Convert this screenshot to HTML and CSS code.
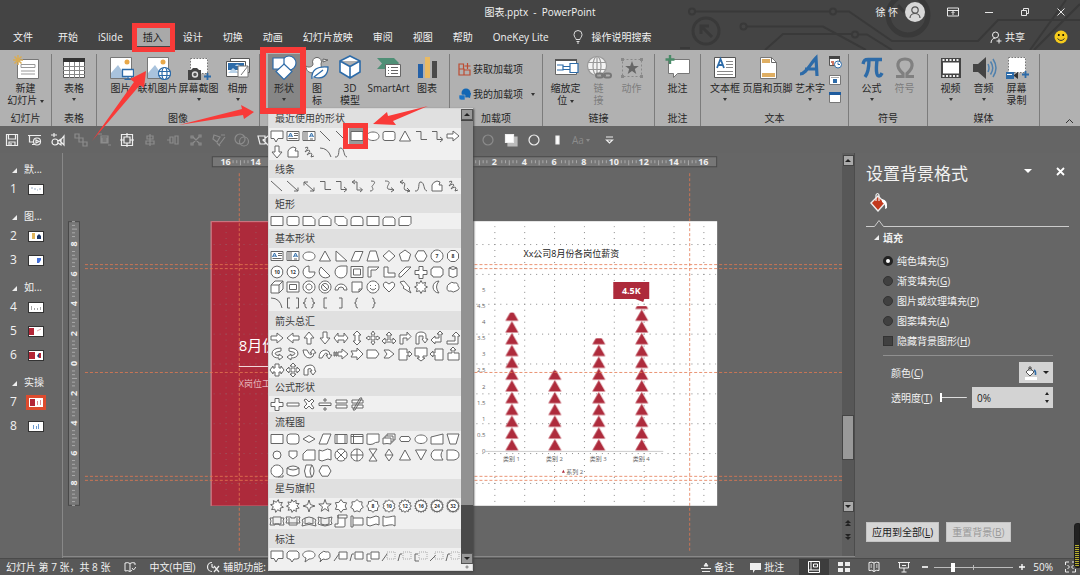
FILE: index.html
```html
<!DOCTYPE html>
<html lang="zh-CN">
<head>
<meta charset="utf-8">
<title>图表.pptx - PowerPoint</title>
<link rel="stylesheet" href="styles.css">
</head>
<body>
<div class="app">
  <header class="top">
    <svg class="circuit" width="400" height="50" viewBox="680 0 400 50">
      <path d="M695 11.500H829M837 11.500h12L892 41h86l20-21h82M747 26.500h76L866 50M765 50l18-16h68M859 34.500h8L892 50M1066 0l-36 50M1080 4l-46 46M680 48h10"/>
      <circle cx="692" cy="11.500" r="3"/><circle cx="833" cy="11.500" r="3"/><circle cx="743.500" cy="26.500" r="3"/><circle cx="855" cy="34.500" r="3"/>
      <circle class="ring" cx="706" cy="31" r="13"/><path class="ring" d="M712 37l-10-10M701 34v-8h8"/>
      <circle class="ring wide" cx="908" cy="15" r="20"/><path class="ring" d="M898 5l6 7"/>
    </svg>
    <div class="titlebar">
      <h1 class="title">图表.pptx&nbsp; -&nbsp; PowerPoint</h1>
      <div class="account">
        <span>徐 怀</span>
        <svg class="avatar" width="20" height="20" viewBox="0 0 20 20"><circle cx="10" cy="10" r="10" fill="#d8d8d8"/><g fill="none" stroke="#555" stroke-width="1.200"><circle cx="10" cy="8" r="3.200"/><path d="M5 16c0-6 10-6 10 0"/></g></svg>
        <button class="win" aria-label="功能区显示选项"><svg width="12" height="12" viewBox="0 0 12 12"><path d="M.5 2h11v8H.5zM.5 4.500h11M6 9V5.500M4.500 7L6 5.500 7.500 7"/></svg></button>
        <button class="win" aria-label="最小化"><svg width="12" height="12" viewBox="0 0 12 12"><path d="M2 6.500h8"/></svg></button>
        <button class="win" aria-label="还原"><svg width="12" height="12" viewBox="0 0 12 12"><path d="M2.500 4.500h5v5h-5zM4.500 4V2.500h5v5H8"/></svg></button>
        <button class="win" aria-label="关闭"><svg width="12" height="12" viewBox="0 0 12 12"><path d="M2.500 2.500l7 7M9.500 2.500l-7 7"/></svg></button>
      </div>
    </div>
    <nav class="tabs">
      <button class="tab file">文件</button><button class="tab">开始</button><button class="tab">iSlide</button><button class="tab active">插入</button><button class="tab">设计</button><button class="tab">切换</button><button class="tab">动画</button><button class="tab">幻灯片放映</button><button class="tab">审阅</button><button class="tab">视图</button><button class="tab">帮助</button><button class="tab">OneKey Lite</button>
      <button class="tab tell"><svg width="10" height="14" viewBox="0 0 10 14" fill="none" stroke="#ddd"><path d="M3 9.500C3 8 1 7 1 4.500a4 4 0 018 0C9 7 7 8 7 9.500zM3.500 11.500h3M4 13h2"/></svg>操作说明搜索</button>
      <button class="tab share"><svg width="12" height="13" viewBox="0 0 12 13" fill="none" stroke="#eee"><circle cx="5.500" cy="4" r="3"/><path d="M1 12c0-3 2-5 4.500-5M9 7.500v5M6.500 10h5"/></svg>共享</button>
      <svg class="smile" width="14" height="14" viewBox="0 0 14 14"><circle cx="7" cy="7" r="6.500" fill="#f5cb1c"/><circle cx="4.800" cy="5" r="1"/><circle cx="9.200" cy="5" r="1"/><path d="M3.500 8.500q3.500 4 7 0" fill="none" stroke="#333"/></svg>
    </nav>
  </header>

  <section class="ribbon">
    <div class="group g-slide">
      <div class="tools">
        <button class="tool"><svg viewBox="0 0 26 26"><path d="M4.500 5.500h21v19h-21z" fill="#fff" stroke="#777"/><path d="M8 10.500h14v3H8zM8 17h14M8 20h14" stroke="#999" fill="none"/><path d="M5 1v10M0 6h10M1.500 2.500l7 7M8.500 2.500l-7 7" stroke="#d9ac55" stroke-width="1.500"/></svg><span>新建</span><span>幻灯片 <i class="dd"></i></span></button>
      </div><div class="caption">幻灯片</div>
    </div>
    <div class="group g-table">
      <div class="tools">
        <button class="tool"><svg viewBox="0 0 26 26"><path d="M2.500 4.500h21v19h-21z" fill="#fff" stroke="#555"/><path d="M2 4h22v4H2z" fill="#333"/><path d="M2 12.500h22M2 16.500h22M2 20.500h22M8.500 8v16M13.500 8v16M18.500 8v16" stroke="#888"/></svg><span>表格</span><i class="dd"></i></button>
      </div><div class="caption">表格</div>
    </div>
    <div class="group g-image">
      <div class="tools">
        <button class="tool"><svg viewBox="0 0 26 26"><path d="M2.500 3.500h21v21h-21z" fill="#fff" stroke="#777"/><circle cx="19" cy="8" r="2.500" fill="#e8a849"/><path d="M3 24V19l7-8 9 13z" fill="#a9c3dd"/><path d="M14.500 15.500h11v7h-11zM20 23v2.500M16.500 25.500h7" fill="#fff" stroke="#2d6ba8" stroke-width="1.300"/></svg><span>图片</span></button>
        <button class="tool"><svg viewBox="0 0 26 26"><path d="M2.500 3.500h21v21h-21z" fill="#fff" stroke="#777"/><circle cx="18" cy="8" r="2.500" fill="#e8a849"/><path d="M3 24V19l7-8 9 13z" fill="#a9c3dd"/><g fill="#fff" stroke="#2d6ba8" stroke-width="1.200"><circle cx="19.500" cy="19.500" r="6"/><ellipse cx="19.500" cy="19.500" rx="2.500" ry="6"/><path d="M13.500 17.500h12M13.500 21.500h12" fill="none"/></g></svg><span>联机图片</span></button>
        <button class="tool"><svg viewBox="0 0 26 26"><path d="M4.500 4.500h17v15h-17z" fill="#fff" stroke="#777" stroke-dasharray="1.500 1.500"/><path d="M2 16h3l2-2h4l2 2h2v10H2z" fill="#444"/><circle cx="9" cy="20.500" r="2.500" fill="#555" stroke="#ddd" stroke-width="1.400"/><path d="M21.500 19v7M18 22.500h7" stroke="#2d6ba8" stroke-width="1.800"/></svg><span>屏幕截图</span><i class="dd"></i></button>
        <button class="tool"><svg viewBox="0 0 26 26"><path d="M5.500 4.500h19v14h-19z" fill="#fff" stroke="#555"/><path d="M1.500 7.500h19v15h-19z" fill="#fff" stroke="#555"/><path d="M3 9h16v7H3z" fill="#2d6ba8"/><path d="M3 19l5-5 6 5zM10 12c2-3 5-1 5 0z" fill="#b9d2e8"/><path d="M13 12h10v11H13zM16 21l7-9" fill="#fff" stroke="#777"/></svg><span>相册</span><i class="dd"></i></button>
      </div><div class="caption">图像</div>
    </div>
    <div class="group g-illus">
      <div class="tools">
        <button class="tool pressed" aria-expanded="true"><svg viewBox="0 0 26 26" fill="#fff" stroke="#2d6ba8" stroke-width="1.200"><circle cx="18" cy="9" r="7"/><path d="M2 4h11v11H2z"/><path d="M13 10l8 7.500-8 8-8-8z"/></svg><span>形状</span><i class="dd"></i></button>
        <button class="tool"><svg viewBox="0 0 26 26" fill="#fff" stroke="#666"><path d="M2 12c0 5 3 7 8 7 6 0 8-4 7-9a4.500 4.500 0 10-8 0c0 3-5 4-7 2z"/><path d="M19 5l5 1-5 2z"/><path d="M8 25c-1-9 5-13 16-12 0 8-5 13-14 10l9-7" stroke="#2d6ba8" stroke-width="1.300"/></svg><span>图</span><span>标</span></button>
        <button class="tool"><svg viewBox="0 0 26 26" fill="#fff" stroke="#2d6ba8" stroke-width="1.600"><path d="M13 2l10 5v11l-10 6-10-6V7zM3 7l10 5.500L23 7M13 12.500V24"/></svg><span>3D</span><span>模型</span></button>
        <button class="tool"><svg viewBox="0 0 26 26"><path d="M1 4h17l5 5-5 6H1l5-5.500z" fill="#4f8f76"/><path d="M9.500 10.500h15v12h-15z" fill="#fff" stroke="#666"/><path d="M12 13.500h1M12 16.500h1M12 19.500h1M15 13.500h7M15 16.500h7M15 19.500h7" stroke="#666"/></svg><span>SmartArt</span></button>
        <button class="tool"><svg viewBox="0 0 26 26"><path d="M4 10h5v14H4z" fill="#2460a7"/><path d="M11 3h5v21h-5z" fill="#e9ba62"/><path d="M18 7h5v17h-5z" fill="#4a4a4a"/></svg><span>图表</span></button>
      </div>
    </div>
    <div class="group g-addin">
      <div class="links">
        <button class="line"><svg width="13" height="13" viewBox="0 0 13 13" fill="none" stroke="#bd4b31" stroke-width="1.200"><path d="M1 1h4.500v5H1zM1 6h5v6H1zM6 7h6v5H6zM9.500 0v6M6.500 3h6"/></svg>获取加载项</button>
        <button class="line"><svg width="13" height="13" viewBox="0 0 13 13"><circle cx="8" cy="5" r="4.500" fill="#1267b4"/><path d="M8 5h5l-1 5-3-1z" fill="#1267b4"/><path d="M1 7h6v5H3q-2 0-2-2z" fill="#1b74c5" stroke="#b1b1b1" stroke-width=".6"/></svg>我的加载项 <i class="dd"></i></button>
      </div><div class="caption">加载项</div>
    </div>
    <div class="group g-link">
      <div class="tools">
        <button class="tool"><svg viewBox="0 0 26 26"><path d="M2.500 5.500h21v15h-21z" fill="#fff" stroke="#666"/><path d="M2 6h22" stroke="#555" stroke-width="2"/><path d="M4 11h6v5H4M17 9.500h8v9h-8zM10 12.500h7v3h-7z" fill="#fff" stroke="#2d6ba8" stroke-width="1.200"/></svg><span>缩放定</span><span>位 <i class="dd"></i></span></button>
        <button class="tool off"><svg viewBox="0 0 26 26" fill="#f3f3f3" stroke="#999" stroke-width="1.200"><circle cx="11" cy="12" r="9.500"/><ellipse cx="11" cy="12" rx="4" ry="9.500"/><path d="M2 8.500h18M2 15.500h18M11 2.500v19" fill="none"/><g fill="none" stroke="#777" stroke-width="2"><rect x="10" y="19.500" width="7" height="4" rx="2"/><rect x="18" y="19.500" width="7" height="4" rx="2"/><path d="M15 21.500h5"/></g></svg><span>链</span><span>接</span></button>
        <button class="tool off"><svg viewBox="0 0 26 26"><path d="M3.500 5.500h19v17h-19z" fill="none" stroke="#888" stroke-dasharray="2 2"/><path d="M13 7l1.800 5h5l-4 3 1.500 5-4.300-3-4.300 3 1.500-5-4-3h5z" fill="#666"/><path d="M2 4h3v3H2zM21 4h3v3h-3zM2 21h3v3H2zM21 21h3v3h-3z" fill="#888"/></svg><span>动作</span></button>
      </div><div class="caption">链接</div>
    </div>
    <div class="group g-comment">
      <div class="tools">
        <button class="tool"><svg viewBox="0 0 26 26"><path d="M3.500 5.500h21v14h-12l-4 4v-4h-5z" fill="#fff" stroke="#777"/><path d="M5 1v9M.5 5.500h9" stroke="#4a8a68" stroke-width="2.400"/></svg><span>批注</span></button>
      </div><div class="caption">批注</div>
    </div>
    <div class="group g-text">
      <div class="tools">
        <button class="tool"><svg viewBox="0 0 26 26"><path d="M2.500 3.500h21v20h-21z" fill="#fff" stroke="#555"/><path d="M5 14l3.500-9 3.500 9M6 11h5" fill="none" stroke="#2d6ba8" stroke-width="1.800"/><path d="M14 7.500h7M14 10.500h7M14 13.500h7M5 17.500h16M5 20.500h16" stroke="#888"/></svg><span>文本框</span><i class="dd"></i></button>
        <button class="tool"><svg viewBox="0 0 26 26"><path d="M5.500 3.500h11l5 5v16h-16z" fill="#fff" stroke="#777"/><path d="M16.500 3.500v5h5" fill="none" stroke="#666"/><path d="M7 5h8v4H7zM7 19h13v4H7z" fill="#dfae62"/></svg><span>页眉和页脚</span></button>
        <button class="tool"><svg viewBox="0 0 26 26"><path d="M3 20C9 20 13 10 19 4l1 18M8 15h12" fill="none" stroke="#2d6ba8" stroke-width="3.200"/></svg><span>艺术字</span><i class="dd"></i></button>
        <div class="mini">
          <button aria-label="日期和时间"><svg width="14" height="14" viewBox="0 0 14 14"><path d="M1.500 2.500h10v8h-10z" fill="#fff" stroke="#555"/><path d="M1 1h11v3H1z" fill="#444"/><path d="M3 7h3M4 9h2" stroke="#bd4b31" stroke-width="1.500"/><circle cx="10" cy="9.500" r="3.500" fill="#fff" stroke="#2d6ba8"/><path d="M10 7.500v2h2" fill="none" stroke="#2d6ba8"/></svg></button>
          <button aria-label="幻灯片编号"><svg width="14" height="14" viewBox="0 0 14 14"><path d="M1.500 2.500h11v9h-11z" fill="#fff" stroke="#777"/><path d="M3 4.500h8" stroke="#aaa"/><path d="M5 6h4v4H5z" fill="#2d6ba8"/></svg></button>
          <button aria-label="对象"><svg width="14" height="14" viewBox="0 0 14 14"><path d="M1.500 1.500h11v10h-11z" fill="#fff" stroke="#777"/><path d="M1 1h12v3H1z" fill="#1f5c9e"/></svg></button>
        </div>
      </div><div class="caption">文本</div>
    </div>
    <div class="group g-symbol">
      <div class="tools">
        <button class="tool"><svg viewBox="0 0 26 26" fill="none" stroke="#2d6ba8" stroke-width="3.400"><path d="M4 10c1-4 2-4.500 5-4.500h14M10 6c0 8-1 13-4 17M18 6c-1 9-1 16 2 16 2 0 2-1 3-3"/></svg><span>公式</span><i class="dd"></i></button>
        <button class="tool off"><svg viewBox="0 0 26 26" fill="none" stroke="#808080" stroke-width="3.200"><path d="M4 22.500h7v-3C3 13 5 5 13 5s10 8 2 14.500v3h7"/></svg><span>符号</span></button>
      </div><div class="caption">符号</div>
    </div>
    <div class="group g-media">
      <div class="tools">
        <button class="tool"><svg viewBox="0 0 26 26"><path d="M3 4h20v20H3z" fill="#444"/><path d="M5 8.500h16v11H5z" fill="#fff"/><path d="M4.500 6h17M4.500 22h17" stroke="#eee" stroke-width="2" stroke-dasharray="2 1.500"/></svg><span>视频</span><i class="dd"></i></button>
        <button class="tool"><svg viewBox="0 0 26 26"><path d="M2 10h5l8-7v22l-8-7H2z" fill="#444"/><path d="M17 10q2 4 0 8M19.500 7.500q4.500 6.500 0 13M22 5q6 9 0 18" fill="none" stroke="#4f80ad" stroke-width="1.500"/></svg><span>音频</span><i class="dd"></i></button>
        <button class="tool"><svg viewBox="0 0 26 26"><path d="M4.500 3.500h17v15h-17z" fill="#fff" stroke="#777" stroke-dasharray="1.500 1.500"/><path d="M2 18h8v7H2z" fill="#2d6ba8"/><path d="M10 21l4-3v7l-4-3z" fill="#333"/><path d="M3 20.500h5" stroke="#fff"/><path d="M21.500 17v7M18 20.500h7" stroke="#2d6ba8" stroke-width="1.800"/></svg><span>屏幕</span><span>录制</span></button>
      </div><div class="caption">媒体</div>
    </div>
    <button class="collapse" aria-label="折叠功能区"><svg width="9" height="6" viewBox="0 0 9 6" fill="none" stroke="#333"><path d="M1 5l3.500-3.500L8 5"/></svg></button>
  </section>

  <div class="qat">
    <div class="qat-left" id="qatLeft"></div>
    <div class="qat-right" id="qatRight"></div>
  </div>

  <main class="work">
    <aside class="thumbs">
      <h2>默...</h2>
      <button class="thumb"><b>1</b><svg viewBox="0 0 14 9"><path d="M0 0h14v9H0z" fill="#fff"/><path d="M2 3h2M5 4h2M8 5h1M10 4h2" stroke="#9bb0c8"/></svg></button>
      <h2>图...</h2>
      <button class="thumb"><b>2</b><svg viewBox="0 0 14 9"><path d="M0 0h14v9H0z" fill="#fff"/><path d="M3 1h3v6H3z" fill="#dfb55c"/><path d="M8 4l2-2 2 2v3H8z" fill="#1c3667"/></svg></button>
      <button class="thumb"><b>3</b><svg viewBox="0 0 14 9"><path d="M0 0h14v9H0z" fill="#fff"/><path d="M8 2h4v2l-2 3H8z" fill="#4470d8"/></svg></button>
      <h2>如...</h2>
      <button class="thumb"><b>4</b><svg viewBox="0 0 14 9"><path d="M0 0h14v9H0z" fill="#fff"/><path d="M2.500 3v4M5.500 5v2M8.500 5v2M11.500 4v3" stroke="#a5a5a5"/></svg></button>
      <button class="thumb"><b>5</b><svg viewBox="0 0 14 9"><path d="M0 0h14v9H0z" fill="#fff"/><path d="M0 1h5v7H0z" fill="#b32536"/><path d="M8 4l4-2" stroke="#e2a5aa"/></svg></button>
      <button class="thumb"><b>6</b><svg viewBox="0 0 14 9"><path d="M0 0h14v9H0z" fill="#fff"/><path d="M0 1h6v7H0z" fill="#b32536"/><path d="M8 5l2-3v5z" fill="#223a78"/><path d="M10 2h2v5h-2z" fill="#b32536"/></svg></button>
      <h2>实操</h2>
      <button class="thumb current"><b>7</b><svg viewBox="0 0 14 9"><path d="M0 0h14v9H0z" fill="#fff"/><path d="M1 1h5v7H1z" fill="#b32536"/><path d="M8.500 3v4M11.500 2v5" stroke="#e08a90"/></svg></button>
      <button class="thumb"><b>8</b><svg viewBox="0 0 14 9"><path d="M0 0h14v9H0z" fill="#fff"/><path d="M4.500 3v4M7.500 4v3M9.500 2v5" stroke="#6d9bd0"/></svg></button>
    </aside>

    <section class="editor">
      <svg class="canvas" id="canvas" width="780" height="403" viewBox="62 153 780 403">
        <defs>
          <pattern id="dotRow" width="5.980" height="29.900" x="464" y="363.500" patternUnits="userSpaceOnUse"><path d="M0 0h1v1H0z"/></pattern>
          <pattern id="dotCol" width="29.900" height="5.980" x="464" y="363.500" patternUnits="userSpaceOnUse"><path d="M0 0h1v1H0z"/></pattern>
          <pattern id="tri" width="13" height="11.800" x="0" y="451" patternUnits="userSpaceOnUse"><path d="M6.500 0L13 11.200H0z" fill="#ae2b3c"/></pattern>
        </defs>
        <rect x="210" y="221" width="507" height="285" fill="#fff"/>
        <rect x="210" y="221" width="250" height="285" fill="#ad2a3b"/>
        <path d="M210.500 506V221.500H460" fill="none" stroke="#cf7d87"/>
        <g class="dots-light"><rect x="212" y="226" width="248" height="278" fill="url(#dotRow)"/><rect x="212" y="226" width="248" height="278" fill="url(#dotCol)"/></g>
        <g class="dots"><rect x="470" y="226" width="246" height="278" fill="url(#dotRow)"/><rect x="470" y="226" width="246" height="278" fill="url(#dotCol)"/></g>
        <text x="238" y="351" class="s-title">8月份</text>
        <path d="M238 366.500h120" stroke="#f3d9dc"/>
        <text x="238" y="387" class="s-sub">X岗位工</text>
        <text x="571" y="257" class="c-title">Xx公司8月份各岗位薪资</text>
        <path d="M485 451.500h178" stroke="#ccc"/>
        <g id="chart"></g>
        <path d="M613 282h36v17h-5l-1 3-8-3h-22z" fill="#ad2a3b"/>
        <text x="631" y="294" class="c-call">4.5K</text>
        <path d="M563 470l1.500 3h-3z" fill="#ad2a3b"/><text x="566" y="474" class="c-small">系列 2</text>
        <path class="guide" d="M84 264.500h758M84 268.500h758M84 372.500h758M84 476.500h758M84 480.500h758M238.500 173v379M689.500 173v379"/>
        <g id="rulers"></g>
      </svg>
      <div class="vscroll">
        <button aria-label="向上滚动"><i class="up"></i></button>
        <div class="track"><div class="knob"></div></div>
        <button aria-label="向下滚动"><i class="down"></i></button>
        <span class="jump"><i class="up"></i><i class="up"></i></span><span class="jump"><i class="down"></i><i class="down"></i></span>
      </div>
    </section>

    <aside class="format">
      <div class="f-head"><h2>设置背景格式</h2><i class="down light"></i><button aria-label="关闭窗格"><svg width="9" height="9" viewBox="0 0 9 9" stroke="#fff" stroke-width="1.800"><path d="M1 1l7 7M8 1L1 8"/></svg></button></div>
      <svg class="bucket" width="20" height="20" viewBox="0 0 20 20"><path d="M9 4l7 7-7 8-7-8z" fill="#c2391d" stroke="#eee" stroke-width="1.400"/><path d="M7 9V3q1.500-3 3 0v6" fill="none" stroke="#eee" stroke-width="1.200"/><path d="M13 7q6 1 5 9l-2 1q1-5-3-7z" fill="#fff"/></svg>
      <svg class="notch" width="203" height="8" viewBox="0 0 203 8" fill="none" stroke="#ccc"><path d="M0 7.500h8.500L13 1.500l4.500 6H203"/></svg>
      <form class="f-body">
        <h3>填充</h3>
        <label><input type="radio" name="fill" checked><span>纯色填充(<u>S</u>)</span></label>
        <label><input type="radio" name="fill"><span>渐变填充(<u>G</u>)</span></label>
        <label><input type="radio" name="fill"><span>图片或纹理填充(<u>P</u>)</span></label>
        <label><input type="radio" name="fill"><span>图案填充(<u>A</u>)</span></label>
        <label><input type="checkbox"><span>隐藏背景图形(<u>H</u>)</span></label>
        <hr>
        <div class="row"><span>颜色(<u>C</u>)</span><button type="button" class="color" aria-label="颜色"><svg width="14" height="14" viewBox="0 0 14 14"><path d="M6 2l4 4-4 4-4-4z" fill="#fff" stroke="#555"/><path d="M5 5V1h2v4" fill="none" stroke="#555"/><path d="M10 4q2 1 1.500 5" fill="none" stroke="#2d6ba8" stroke-width="1.500"/><path d="M1 11h12v3H1z" fill="#fff"/></svg><i class="down"></i></button></div>
        <div class="row"><label for="alpha">透明度(<u>T</u>)</label><input class="slide" type="range" value="0" aria-label="透明度滑块"><span class="spin"><input id="alpha" type="text" value="0%"><span class="arrows"><i class="up"></i><i class="down"></i></span></span></div>
      </form>
      <div class="f-foot"><button>应用到全部(<u>L</u>)</button><button disabled>重置背景(<u>B</u>)</button></div>
      <div class="meter"></div>
    </aside>
  </main>

  <footer class="status">
    <span>幻灯片 第 7 张，共 8 张</span>
    <svg class="book" width="12" height="12" viewBox="0 0 12 12" fill="none" stroke="#eee"><path d="M6 2.500Q4 1 1 2v8q3-1 5 .5zM6 2.500Q8 1 11 2v2M6 10.500q1-1 2-1M8 7l1.500 2L12 6"/></svg>
    <span class="lang">中文(中国)</span>
    <span class="access"><svg width="13" height="12" viewBox="0 0 13 12" fill="none" stroke="#eee" stroke-width="1.200"><path d="M5 1.500a4.500 4.500 0 000 9M5 3v3l2 1M7 5l5 6M12 5l-5 6"/></svg>辅助功能:</span>
    <span class="right">
      <button class="note"><svg width="10" height="11" viewBox="0 0 10 11" stroke="#eee"><path d="M5 1l2 3H3zM0 6.500h10M1 9.500h8" fill="#eee"/></svg>备注</button>
      <button class="cmt"><svg width="12" height="11" viewBox="0 0 12 11" fill="#eee"><path d="M1 1h11v7H6l-2 3V8H1z"/></svg>批注</button>
      <button class="view on" aria-label="普通视图"><svg width="12" height="12" viewBox="0 0 12 12" fill="none" stroke="#fff"><path d="M.5.500h11v11H.5zM.5 9h11M3 1v8M5.500 3h4v3h-4z"/></svg></button>
      <button class="view" aria-label="幻灯片浏览"><svg width="12" height="12" viewBox="0 0 12 12" fill="#eee"><path d="M0 1h5v4H0zM7 1h5v4H7zM0 7h5v4H0zM7 7h5v4H7z"/></svg></button>
      <button class="view" aria-label="阅读视图"><svg width="12" height="12" viewBox="0 0 12 12" fill="none" stroke="#eee"><path d="M1 1.500q3-1 5 .5 2-1.500 5-.5v8q-3-1-5 1-2-2-5-1zM6 2v9M2.500 4H4M2.500 6H4M8 4h1.500M8 6h1.500"/></svg></button>
      <button class="view" aria-label="幻灯片放映"><svg width="12" height="12" viewBox="0 0 12 12" fill="none" stroke="#eee"><path d="M0 1.500h12M1.500 2v5h9V2M6 7v4M3.500 11h5M4 4.500h4"/></svg></button>
      <span class="zoom">
        <svg width="6" height="8" viewBox="0 0 6 8" stroke="#fff" stroke-width="1.600"><path d="M0 4h6"/></svg>
        <input type="range" value="22" aria-label="缩放">
        <svg width="6" height="8" viewBox="0 0 6 8" stroke="#fff" stroke-width="1.300"><path d="M0 4h6M3 1v6"/></svg>
      </span>
      <span class="pct">50%</span>
      <svg class="fit" width="11" height="12" viewBox="0 0 11 12" fill="none" stroke="#eee"><path d="M.5 4V1H4M7 1h3.500v3M.5 8v3H4M7 11h3.500V8M2.500 4l2 2-2 2M8.500 4l-2 2 2 2"/></svg>
    </span>
  </footer>

  <div class="menu">
    <div class="gallery" id="gallery"></div>
    <div class="m-scroll"><button aria-label="向上"><i class="up"></i></button><div class="m-track"></div><button aria-label="向下"><i class="down"></i></button></div>
    <div class="grip"></div>
  </div>

  <div class="mark mark-tab"></div>
  <div class="mark mark-shape"></div>
  <div class="mark mark-rect"></div>
  <svg class="arrows-over" width="440" height="150" viewBox="0 0 440 150" fill="#f93a38"><path d="M92 141L134 82l-4-3 16-8-2 17-4-3z"/><path d="M179 125L242 109l-1-4 13 7-10 7-1-4z"/><path d="M428 106L388 116l-1-4-14 12 23 1-3-4z"/></svg>
</div>
<script src="app.js"></script>
</body>
</html>
```
FILE: styles.css
```css
* { box-sizing: border-box; }
body { margin: 0; background: #666; font: 10px/12px "Open Sans", "Noto Sans CJK SC", sans-serif; color: #f2f2f2; }
button { font: inherit; color: inherit; background: none; border: 0; padding: 0; margin: 0; }
h1, h2, h3 { margin: 0; font: inherit; }
.app { position: relative; display: flex; flex-direction: column; height: 100vh; min-height: 540px; overflow: hidden; }
i.up, i.down, i.dd { display: inline-block; width: 0; height: 0; border: 3px solid transparent; }
i.up { border-top: 0; border-bottom-color: #222; }
i.down { border-bottom: 0; border-top-color: #222; }
i.dd { border-width: 3px 2px 0; border-top-color: #333; vertical-align: middle; }
i.light { border-top-color: #fff; border-width: 4px 4px 0; }

.top { position: relative; flex: none; background: #444; }
.circuit { position: absolute; right: 0; top: 0; fill: none; stroke: #393939; stroke-width: 2; }
.ring { stroke-width: 3; }
.wide { stroke-width: 5; }
.titlebar { position: relative; display: grid; grid-template-columns: 1fr auto 1fr; height: 24px; align-items: center; }
.title { grid-column: 2; }
.account { display: flex; justify-content: flex-end; align-items: center; padding-right: 1px; }
.avatar { margin: 0 10px 0 7px; }
.win { width: 36px; height: 24px; display: grid; place-items: center; }
.win svg { fill: none; stroke: #e6e6e6; }
.tabs { position: relative; display: flex; height: 26px; align-items: center; padding: 0 12px 0 3px; }
.tab { padding: 3px 10px; white-space: nowrap; }
.tab.file { margin-right: 5px; }
.tab.active { background: #a9a9a9; color: #222; }
.tell { display: flex; align-items: center; gap: 9px; margin-left: 4px; }
.share { display: flex; align-items: center; gap: 3px; margin-left: auto; margin-right: 19px; }

.ribbon { display: grid; flex: none; grid-template-columns: 52fr 45fr 163fr 190fr 93fr 112fr 46fr 148fr 79fr 112fr 40fr; height: 76px; background: #b1b1b1; color: #262626; }
.group { display: flex; flex-direction: column; margin: 4px 0; border-right: 1px solid #7c7c7c; }
.tools { display: flex; flex: 1; justify-content: center; }
.caption { text-align: center; height: 12px; margin-bottom: 2px; }
.tool { display: flex; flex-direction: column; align-items: center; white-space: nowrap; flex: none; width: 33px; height: 58px; }
.tool svg { width: 26px; height: 26px; margin-bottom: 2px; flex: none; }
.tool > i.dd { margin-top: 4px; }
.tool.off { color: #7d7d7d; }
.pressed { background: #868686; }
.g-image .tool { width: 37px; }
.g-image .tool:nth-child(3) { width: 45px; }
.g-image .tool:nth-child(4) { width: 33px; }
.g-illus .tools { padding-left: 2px; }
.g-illus .tool:nth-child(4) { width: 44px; }
.g-text .tool:nth-child(2) { width: 50px; }
.g-text .tool:nth-child(1), .g-text .tool:nth-child(3) { width: 35px; }
.mini { display: flex; flex-direction: column; gap: 4px; padding-top: 1px; }
.mini button { height: 14px; }
.links { flex: 1; display: flex; flex-direction: column; gap: 11px; padding: 8px 0 0 8px; }
.line { display: flex; align-items: center; gap: 2px; height: 14px; white-space: nowrap; }
.line i.dd { margin-left: 6px; }
.collapse { align-self: end; justify-self: center; margin: 0 0 4px 18px; }

.qat { display: flex; flex: none; height: 27px; align-items: center; background: #656565; }
.qat svg { width: 16px; height: 16px; fill: none; stroke: #eee; stroke-width: 1.2; flex: none; }
.qat svg.dim { stroke: #8c8c8c; }
.qat-left { display: flex; gap: 7px; padding-left: 4px; width: 480px; }
.qat-right { display: flex; gap: 7px; }
.aa { color: #8c8c8c; width: 22px; line-height: 16px; white-space: nowrap; }
.aa i.dd { border-top-color: #8c8c8c; }

.work { display: flex; flex: 1; min-height: 0; }
.thumbs { width: 63px; flex: none; border-right: 1px solid #888; padding-top: 1px; }
.thumbs h2 { height: 23px; padding: 9px 0 0 24px; position: relative; white-space: nowrap; }
.thumbs h2::before, .f-body h3::before { content: ""; position: absolute; left: 12px; top: 14px; border-left: 5px solid transparent; border-bottom: 5px solid #eee; }
.thumb { display: flex; align-items: center; height: 24px; width: 100%; padding-left: 10px; }
.thumb b { font-weight: 400; font-size: 12px; width: 18px; text-align: left; }
.thumb svg { width: 16px; height: 11px; border: 1px solid #333; }
.current svg { outline: 2px solid #dd4b2e; border-color: #dd4b2e; }

.editor { flex: 1; min-width: 0; display: flex; border-bottom: 1px solid #888; margin-bottom: 1px; }
.canvas { flex: 1; min-width: 0; display: block; }
#dotRow path, #dotCol path { fill: #888; }
.dots-light { opacity: .45; }
.guide { fill: none; stroke: #e37850; stroke-dasharray: 3 2; stroke-opacity: .8; }
.canvas text { fill: #fff; }
.canvas .s-title { font-size: 15px; }
.canvas .s-sub { fill: #e5b5bb; font-size: 9px; }
.canvas .c-title { fill: #222; text-anchor: middle; font-size: 9px; }
.canvas .c-call { font-size: 9px; font-weight: 700; text-anchor: middle; }
.canvas .c-small { fill: #666; font-size: 6px; }
.canvas .end { text-anchor: end; }
.canvas .mid { text-anchor: middle; }
.canvas .rule { font-size: 9px; font-weight: 700; fill: #eee; text-anchor: middle; }
.vscroll { width: 13px; flex: none; display: flex; flex-direction: column; align-items: center; background: #5e5e5e; border-right: 1px solid #4c4c4c; padding: 2px 0 16px; }
.vscroll button { width: 11px; height: 11px; background: #aaa; display: grid; place-items: center; border: 1px solid #444; flex: none; }
.track { flex: 1; width: 100%; display: flex; flex-direction: column; background: #575757; }
.track::before { content: ""; flex: 250; }
.track::after { content: ""; flex: 41; }
.knob { flex: 43; background: #999; border: 1px solid #444; }
.jump { display: flex; flex-direction: column; height: 14px; justify-content: flex-end; }

.format { position: relative; width: 225px; flex: none; display: flex; flex-direction: column; padding: 10px 11px 16px; }
.f-head { display: flex; align-items: center; height: 22px; }
.f-head h2 { font-size: 17px; line-height: 22px; flex: 1; }
.f-head button { margin: 0 4px 4px 24px; }
.f-head i { margin-bottom: 6px; }
.bucket { margin: 7px 0 0 3px; flex: none; }
.notch { margin-top: 7px; width: 100%; flex: none; }
.f-body { padding: 4px 16px 0 17px; position: relative; }
.f-body h3 { font-weight: 700; height: 14px; margin-bottom: 6px; line-height: 14px; }
.f-body h3::before { left: 8px; top: 8px; }
.f-body > label { display: flex; align-items: center; height: 20px; gap: 4px; white-space: nowrap; }
input[type=radio], input[type=checkbox] { appearance: none; margin: 0; width: 10px; height: 10px; border-radius: 50%; background: #404040; border: 1px solid #333; }
input[type=checkbox] { border-radius: 0; }
input[type=radio]:checked { background: #fff; border: 3px solid #222; }
.f-body hr { border: 0; height: 1px; background: #909090; margin: 4px 0 6px; }
.row { display: flex; align-items: center; height: 21px; margin-bottom: 4px; padding-left: 8px; white-space: nowrap; }
.color { margin-left: auto; width: 34px; height: 21px; background: #d3d3d3; display: flex; align-items: center; justify-content: center; gap: 5px; }
.slide { appearance: none; flex: 1; min-width: 0; height: 9px; margin: 0 5px 0 8px; background: linear-gradient(#ddd, #ddd) center / 100% 1px no-repeat; }
.slide::-webkit-slider-thumb { appearance: none; width: 2px; height: 9px; background: #fff; }
.spin { display: flex; width: 81px; height: 21px; background: #d3d3d3; }
.spin input { width: 100%; min-width: 0; border: 0; background: none; font: inherit; color: #222; padding: 0 5px; }
.arrows { display: flex; flex-direction: column; justify-content: space-between; padding: 5px 4px; }
.arrows i { border-left-width: 2px; border-right-width: 2px; }
.f-foot { margin-top: auto; display: flex; gap: 7px; }
.f-foot button { background: #d6d6d6; color: #222; height: 20px; padding: 0 5px; border: 1px solid #c4c4c4; white-space: nowrap; }
.f-foot button:disabled { color: #999; }
.meter { position: absolute; right: 0; bottom: -10px; width: 6px; height: 45px; background: linear-gradient(#222 20px, transparent 20px), repeating-linear-gradient(#222 0 1px, #b5ad2b 1px 2px); border: 1px solid #1c1c1c; border-radius: 3px 0 0 3px; z-index: 2; }

.status { display: flex; flex: none; align-items: center; height: 17px; background: #585858; border-top: 1px solid #4a4a4a; padding-left: 6px; white-space: nowrap; }
.book { margin-left: 14px; }
.lang { margin: 0 12px 0 13px; }
.access, .note, .cmt { display: flex; align-items: center; gap: 3px; }
.right { display: flex; align-items: center; margin-left: auto; height: 100%; padding-right: 4px; }
.cmt { margin: 0 15px; }
.view { width: 30px; height: 100%; display: grid; place-items: center; }
.view.on { background: #3d3d3d; }
.zoom { display: flex; align-items: center; gap: 6px; margin-left: 3px; }
.zoom input { appearance: none; width: 79px; height: 10px; margin: 0; background: linear-gradient(#bbb, #bbb) center / 1px 5px no-repeat, linear-gradient(#bbb, #bbb) center / 100% 1px no-repeat; }
.zoom input::-webkit-slider-thumb { appearance: none; width: 4px; height: 9px; background: #fff; }
.pct { margin: 0 12px 0 8px; }

.menu { position: absolute; left: 268px; top: 108px; bottom: 4px; width: 205px; background: #f0f0f0; border: 1px solid #d5d5d5; color: #3c3c3c; display: grid; grid-template-columns: 1fr 12px; grid-template-rows: 1fr 6px; padding-right: 2px; box-shadow: 1px 1px 2px #444; }
.gallery { display: flex; flex-direction: column; min-height: 0; }
.kind { display: flex; flex-direction: column; min-height: 0; }
.kind h3 { flex: 19; min-height: 0; padding-left: 6px; background: #e0e0e0; display: flex; align-items: center; }
.shapes { display: grid; grid-template-columns: repeat(12, 1fr); grid-auto-rows: 1fr; min-height: 0; }
.shapes button { display: grid; place-items: center; min-height: 0; }
.shapes svg { width: 16px; height: 16px; fill: #fff; stroke: #666; stroke-width: 1; display: block; margin: -1px 0; }
.shapes svg .n { fill: none; }
.shapes svg text { fill: #333; stroke: none; font-size: 5px; font-weight: 700; text-anchor: middle; }
.shapes svg .t { stroke: #2d6ba8; fill: none; }
.shapes .sel { background: #999; }
.m-scroll { display: flex; flex-direction: column; background: #555; }
.m-scroll button { height: 11px; background: #999; border: 1px solid #555; display: grid; place-items: center; }
.m-track { flex: 1; background: linear-gradient(#444 1px, #929292 1px 89%, #4a4a4a 89%); }
.grip { grid-column: 1 / 3; background: radial-gradient(circle at 198px 3px, #999 1px, transparent 2px); }

.mark { position: absolute; border: 5px solid #f93a38; }
.mark-tab { left: 132px; top: 23px; width: 43px; height: 29px; }
.mark-shape { left: 260px; top: 47px; width: 46px; height: 67px; border-width: 6px; }
.mark-rect { left: 343px; top: 123px; width: 25px; height: 26px; }
.arrows-over { position: absolute; left: 0; top: 0; pointer-events: none; }
```
FILE: app.js
```js
// Point lists for regular polygons and stars centred on a 16x16 icon.
function ring(n, r, turn, inner) {
  const pts = [];
  const total = inner ? n * 2 : n;
  for (let k = 0; k < total; k++) {
    const a = (k / total) * Math.PI * 2 - Math.PI / 2 + (turn || 0);
    const q = inner && k % 2 ? inner : r;
    pts.push((8 + q * Math.cos(a)).toFixed(1) + ' ' + (8 + q * Math.sin(a)).toFixed(1));
  }
  return 'M' + pts.join('L') + 'z';
}
const tag = (d, c) => `<path${c ? ` class="${c}"` : ''} d="${d}"/>`;
const badge = (d, t) => `<path d="${d}"/><text x="8" y="10">${t}</text>`;
const disc = ring(24, 6);
const textH = tag('M2 3.500h12v9H2z') + tag('M3.500 9l2-4 2 4M4 8h3', 't') + tag('M9 5.500h4M9 7.500h4M3.500 10.500h9', 'n');
const textV = tag('M2 3.500h12v9H2z') + tag('M8.500 9l2-4 2 4M9 8h3', 't') + tag('M4 4v8M6 4v8M9 11h3', 'n');
const rect = 'M2 3.500h12v9H2z';
const round = 'M4 3.500h8q2 0 2 2v5q0 2-2 2H4q-2 0-2-2v-5q0-2 2-2z';
const oval = 'M8 4c8 0 8 8.500 0 8.500S0 4 8 4z';
const right = 'M2 6h6V3l6 5-6 5v-3H2z';
const left = 'M14 6H8V3L2 8l6 5v-3h6z';
const up = 'M6 14V8H3l5-6 5 6h-3v6z';
const down = 'M6 2v6H3l5 6 5-6h-3V2z';
const plus = 'M6 2.500h4v4h4v4h-4v4H6v-4H2v-4h4z';
const elbow = '-M3 3.500h5v8h6';
const elbowA = '-M3 3.500h5v8h5M11 9l3 2.500-3 2.500';
const curve = '-M2 13c6 1 2-10 6-9s2 8 6 9';
const free = 'M3 13V7q1-3 5-4l3 1-1 3h3v6z';
const scrib = '-M4 4q3-2 3 0L4 8q4-3 5-1l-3 4q4-3 5-1l-1 3 3-1';
const tri = 'M8 3l5.500 10h-11z';
const arc = '-M3 4q8 0 11 9';
const callout = 'M2 3h12v7.500H9L7 14l-2-3.500H2z';
const dashBox = '<path class="n" stroke="#aaa" stroke-dasharray="1 1" d="M6 4h8v7H6z"/>';

const kinds = [
  ['最近使用的形状', 2, [callout, textH, textV, '-M3 3l10 10', '-M3 3l10 10', rect, oval, round, tri, elbow, elbowA, right, down, free, scrib, arc, curve]],
  ['线条', 1, ['-M2 3l11 10', '-M2 3l11 10M13 9.500V13H9', '-M3 4l10 9M13 9.500V13H9M3 7.500V4h4', elbow, elbowA, '-M4 4h4v8h5M11 9.500l2.500 2.500-2.500 2M6 2L3 4l3 2', '-M6 3c8 0 0 5 1 6s2 4-2 4', '-M4 3c9 0 0 5 3 8l6 1M10 9.500l3 2.500-3 2', '-M3 4c9 0 2 5 5 8l5 1M10 10l3 3-3 1M6 2L3 4l3 2', curve, free, scrib]],
  ['矩形', 1, [rect, round, 'M2 3.500h9l3 3v6H2z', 'M5 3.500h6l3 3v6H2v-6z', 'M2 3.500h9l3 3v6H5l-3-3z', 'M5 3.500h6q3 0 3 3v6H2v-6q0-3 3-3z', rect, 'M4 4h8l2 2v6.500H2V6z', 'M4 3.500h10v7l-2 2H2v-7z']],
  ['基本形状', 4, [textH, textV, oval, tri, 'M3 3v10h11z', 'M6 3.500h8L10 13H2z', 'M5 3h6l3 10H2z', 'M8 2.500l6 5.500-6 5.500L2 8z', ring(5, 6), ring(6, 6, 0.52), badge(disc, '7'), badge(ring(8, 6, 0.39), '8'),
    badge(ring(10, 6), '10'), badge(ring(12, 6), '12'), 'M8 2a6 6 0 106 6H8z', 'M4 3a6 6 0 109 9z', 'M14 2v6a6 6 0 11-6-6z', 'M2 2.500h12v11H2zM4.500 5h7v6h-7z', 'M3 3h11l-3 3H6v7H3z', 'M3 3h4v6h7v4H3z', 'M9 3h5L4 13H2v-3z', plus, 'M4 3h8q0 2 2 2v6q-2 0-2 2H4q0-2-2-2V5q2 0 2-2z', 'M4 4q4-3 8 0v8q-4 3-8 0zM4 4q4 3 8 0',
    'M2 6h8v8H2zM2 6l4-4h8l-4 4M14 2v8l-4 4', 'M2 3h12v10H2zM4.500 5.500h7v5h-7z', disc + ring(20, 3), disc + ring(20, 3.5) + 'M5 5l6 6', 'M2 11a6 6 0 0112 0h-3a3 3 0 00-6 0z', 'M3 3h10v7l-3 3H3zM13 10h-3v3', disc + 'M5.500 6v1M10.500 6v1M5 9q3 4 6 0', 'M8 13L3 8q-2-4 2-5l3 2 3-2q4 1 2 5z', 'M3 3l4-1 6 7-1 1 2 4-8-5 1-1z', ring(8, 6.5, 0, 4), 'M10 2a6 6 0 000 12q-5-6 0-12z', 'M4 5q3-3 5-1 4-1 4 3 3 3-2 5-3 2-5 0-4 1-4-3 0-3 2-4z',
    '-M2 3q9 0 11 10', '-M5 3H2.500v10H5M11 3h2.500v10H11', '-M6 3Q4 3 4 5v2L2 8l2 1v2q0 2 2 2M10 3q2 0 2 2v2l2 1-2 1v2q0 2-2 2', '-M10 3H7v10h3', '-M6 3h3v10H6', '-M9 3q-2 0-2 2v2L5.500 8 7 9v2q0 2 2 2', '-M7 3q2 0 2 2v2l1.500 1L9 9v2q0 2-2 2']],
  ['箭头总汇', 3, [right, left, up, down, 'M1 8l4-5v3h6V3l4 5-4 5v-3H5v3z', 'M8 1l4 4h-2v6h2l-4 4-4-4h2V5H4z', 'M8 1l2 3H9v3h3V6l3 2-3 2V9H9v3h1l-2 3-2-3h1V9H4v1L1 8l3-2v1h3V4H6z', 'M8 2l3 3H9v5h3V8l3 3-3 3v-2H4v2l-3-3 3-3v2h3V5H5z', 'M3 14V5h7V2l4 4.500-4 4V8H6v6z', 'M3 14V6q0-4 5-4t5 4v3h2l-3 4-3-4h1V6H6v8z', 'M2 10l4-4v2h4V4H8l3-3 3 3h-2v8H6v2z', 'M2 14v-3h8V6H7l4-4 4 4h-2v8z',
    'M12 2Q3 2 3 8q1 4 7 4v2l4-3-4-3v2Q1 7 12 5z', 'M4 2q9 0 9 6-1 4-7 4v2l-4-3 4-3v2q9-3-2-5z', 'M2 4q1 8 7 8 4-1 4-5h2l-3-4-3 4h2q-1 5-5-3z', 'M2 12q0-8 7-8 4 1 4 5h2l-3 4-3-4h2q-2-5-6 3z', 'M1 6h1v4H1zM3 6h1v4H3zM5 6h4V3l6 5-6 5v-3H5z', 'M2 5h6V2l6 6-6 6v-3H2l2-3z', 'M2 4h9l3 4-3 4H2z', 'M3 4h5l5 4-5 4H3l3-4z', 'M2 3h8v4h2V5l3 3-3 3V9h-2v5H2z', 'M2 2h12v8H10v2h2l-4 3-4-3h2v-2H2z', 'M14 3H6v4H4V5L1 8l3 3V9h2v5h8z', 'M3 14V7h4V4H5l3-3 3 3H9v3h5v7z',
    'M6 2h4v4h2V4l3 4-3 4v-2h-2v4H6v-4H4v2L1 8l3-4v2h2z', 'M8 1l3 3H9v3h3V5l3 3-3 3V9H9v3h2l-3 3-3-3h2V9H4v2L1 8l3-3v2h3V4H5z', 'M3 13V7q1-4 6-4t5 6h1l-3 4-3-4h2q-1-4-4-2v6z']],
  ['公式形状', 1, [plus, 'M2 7h12v3H2z', 'M3 4l2-1 3 3 3-3 2 2-3 3 3 4-2 1-3-3-3 3-2-2 3-3z', 'M2 7h12v2.500H2zM7 3h2v2H7zM7 12h2v2H7z', 'M3 4h11v3H3zM3 9h11v3H3z', 'M3 4h11v3H3zM3 9h11v3H3zM11 2h2L6 14H4z']],
  ['流程图', 3, [rect, 'M5 3h6q3 0 3 3v4q0 3-3 3H5q-3 0-3-3V6q0-3 3-3z', 'M8 4.500l6 3.500-6 3.500L2 8z', 'M6 3h8l-4 10H2z', rect + 'M4 3.500v9M12 3.500v9', rect + 'M4.500 3.500v9M2 5.500h12', 'M2 3h12v8q-4 0-6 2-3 1-6 0z', 'M2 7h8v6q-4-1-8 0zM4 7V5h8v6h-2M6 5V3h8v6h-2', 'M4 5.500h8q3 2.500 0 5H4q-3-2.500 0-5z', oval, 'M2 6l12-3v10H2z', 'M2 3h12l-3 10H5z',
    'M8 4a4 4 0 110 8 4 4 0 010-8z', 'M4 4h8v5l-4 3-4-3z', 'M6 3h8v10H2V7z', 'M2 3q4 2 6 0t6 0v10q-3-2-6 0t-6 0z', disc + 'M4 4l8 8M12 4l-8 8', disc + 'M8 2v12M2 8h12', 'M4 2h8L4 14h8z', 'M8 2l4 6-4 6-4-6zM4 8h8', tri, 'M2.500 3h11L8 13z', 'M5 3h9q-4 5 0 10H5q-6-5 0-10z', 'M2 3h7q5 1 5 5t-5 5H2z',
    disc + 'M9 14h5v-2', 'M2 5q6-4 12 0v6q-6 4-12 0zM2 5q6 4 12 0', 'M5 2h6q4 6 0 12H5q-3-6 0-12zM11 2q-4 6 0 12', ring(6, 6, 0.52)]],
  ['星与旗帜', 2, [ring(8, 6.5, 0.2, 3.8), ring(9, 6.5, 0.5, 4), ring(4, 6, 0, 2), ring(5, 6.5, 0, 2.6), ring(6, 6.5, 0, 4.2), ring(7, 6.5, 0, 4.8), badge(ring(8, 6.3, 0, 5), '8'), badge(ring(10, 6.3, 0, 5), '10'), badge(ring(12, 6.5, 0, 5), '12'), badge(ring(16, 6.5, 0, 5), '16'), badge(ring(18, 6.5, 0, 5), '24'), badge(ring(20, 6.5, 0, 5), '32'),
    'M1 5h3V4h8v1h3l-1 3 1 4h-5v-1H6v1H1l1-4zM4 5v6h8V5', 'M1 4h5v1h4V4h5l-1 3 1 3h-3v2H4v-2H1l1-3zM4 5v5h8V5', 'M1 7l3-2q4-2 8 0l3 2-1 2 1 4-4-1q-3-1-6 0l-4 1 1-4zM4 5v6q4-2 8 0V5', 'M1 4q7 3 14 0l-1 4 1 3-3 1q-4 2-8 0l-3-1 1-3zM4 5v6q4 2 8 0V5', 'M5 2h9v3h-2v8q0 1-2 1H2v-3h3zM5 2v3h7', 'M2 3h2v2h10v7H4v2H2zM4 5v7', 'M2 4q3 2 6 0t6 0v8q-3-2-6 0t-6 0z', 'M2 3q2 2 6 1t6-1v10q-2-2-6-1t-6 1z']],
  ['标注', 1, [callout, 'M4 3h8l2 2v5l-2 1H9l-2 3-2-3H4l-2-1V5z', 'M8 3c8 0 8 8 0 8l-4 3 1-4C-1 8 2 3 8 3z', 'M4 5q3-3 5-1 4-1 4 3 1 3-2 4-3 1-5 0l-3 3 1-3q-3-1-2-4z', 'M6 4h8v7H6zM6 6l-5 7', 'M6 4h8v7H6zM5 6H3l-2 7', 'M6 4h8v7H6zM5 6H2v7h4'].concat(
    ['M6 6l-5 7', 'M5 6H3l-2 7', 'M5 6H2v7h4', 'M7 7l-6 6', 'M5 6H3l-2 7'].map(d => tag(d, 'n') + dashBox))]
];
document.getElementById('gallery').innerHTML = kinds.map(([name, rows, list], g) => {
  const cells = list.map((s, k) => {
    const body = s[0] === '<' ? s : s[0] === '-' ? tag(s.slice(1), 'n') : tag(s);
    return `<button${g === 0 && k === 5 ? ' class="sel"' : ''} aria-label="${name} ${k + 1}"><svg viewBox="0 0 16 16">${body}</svg></button>`;
  }).join('');
  return `<section class="kind" style="flex:${19 + rows * 16}"><h3>${name}</h3><div class="shapes" style="flex:${rows * 16}">${cells}</div></section>`;
}).join('');

// Quick access bar.
const icon = (d, c) => `<svg class="${c || ''}" viewBox="0 0 16 16"><path d="${d}"/></svg>`;
document.getElementById('qatLeft').innerHTML = [
  ['M2.500 2.500h11v11h-11zM4.500 3v4h7V3M5 13v-3h6v3M7 11v2'],
  ['M1 3.500h13M2.500 4v6h4M7.500 12.500H5M10 6a3.500 3.500 0 110 7 3.500 3.500 0 010-7zM9 8v3l3-1.500z'],
  ['M1 3h6M4 1v4M5 7a3 3 0 110 6 3 3 0 010-6zM8 9l3-2v6l-3-2M14 4v9l-4-4z'],
  ['M2 2h4v4H2zM6 6h4v4H6zM10 10h4v4h-4z', 'dim'], ['M5 4h7v7H5zM2 2h4M12 13h3M6 6h5v4H6zM6 8h5', 'dim'],
  ['M2.500 2.500h11v11h-11zM5 5h6v6H5zM8 1v4M8 11v4M1 8h4M11 8h4'],
  ['M8 2v12M5 4h6v3H5zM4 9h8v3H4z', 'dim'], ['M5 5h3v6H5zM10 4h3v8h-3zM2 8h3', 'dim'],
  ['M3 4h2v2H3zM11 3h2v2h-2zM3 11h2v2H3zM11 11h2v2h-2zM5 5l6 6M5 11l6-6', 'dim'],
  ['M3 3l6 2-3 5-4-3zM8 13l6-8M6 11l3 3M10 3h4', 'dim'],
  ['M6 2a5 5 0 110 10A5 5 0 016 2zM10 5a4.500 4.500 0 110 9 4.500 4.500 0 010-9z', 'dim'], ['M1 4h7v8H3zM6 8l5-4 4 4-4 5z']
].map(a => icon(...a)).join('');
document.getElementById('qatRight').innerHTML =
  icon('M8 3a5 5 0 110 10A5 5 0 018 3z', 'dim') +
  '<svg viewBox="0 0 16 16"><path d="M5 5h9v9H5z" fill="#bbb" stroke="#bbb"/><path d="M2.500 2.500h8v8h-8z" fill="#fff"/></svg>' +
  icon('M8 3a5 5 0 110 10A5 5 0 018 3z') + '<svg viewBox="0 0 16 16"><path d="M7 4h3v8H7z" fill="#fff"/></svg>' +
  '<span class="aa">Aa <i class="dd"></i></span>' + icon('M5 5h7M5.500 8h6L8.500 11z');

// Stacked triangle columns with their axis labels.
let chart = '';
[[505, 4.3], [548, 2.5], [592, 3.5], [635, 4.5]].forEach(([x, v], k) => {
  const h = v * 32.2;
  chart += `<g transform="translate(${x} 0)"><rect x="0" y="${451 - h}" width="13" height="${h}" fill="url(#tri)"/></g>`;
  chart += `<text class="c-small mid" x="${x + 6}" y="461">类别 ${k + 1}</text>`;
});
for (let k = 0; k <= 10; k++) chart += `<text class="c-small end" x="485" y="${453 - k * 16.1}">${k / 2}</text>`;
document.getElementById('chart').innerHTML = chart;

// Rulers run outward from the slide centre; the span under the open menu is left plain.
let r = '<rect x="211.500" y="156.500" width="505" height="10" fill="#777" stroke="#4a4a4a"/><rect x="67.500" y="221.500" width="11" height="284" fill="#777" stroke="#4a4a4a"/>';
const unit = 14.95;
for (let n = -16; n <= 16; n++) {
  const x = 464 + n * unit;
  if (x > 262 && x < 478) continue;
  if (n % 2 === 0) r += `<text class="rule" x="${x}" y="165">${Math.abs(n)}</text>`;
  for (const f of n % 2 ? [-0.5, -0.25, 0, 0.25, 0.5] : []) r += `<path stroke="#aaa" d="M${x + f * unit} 160v${f ? 3 : 5}"/>`;
}
for (let n = -9; n <= 9; n++) {
  const y = 363.5 + n * unit;
  if (n % 2 === 0) r += `<text class="rule" transform="translate(76 ${y}) rotate(-90)">${Math.abs(n)}</text>`;
  for (const f of n % 2 ? [-0.5, -0.25, 0, 0.25, 0.5] : []) r += `<path stroke="#aaa" d="M71 ${y + f * unit}h${f ? 3 : 5}"/>`;
}
document.getElementById('rulers').innerHTML = r;
```
